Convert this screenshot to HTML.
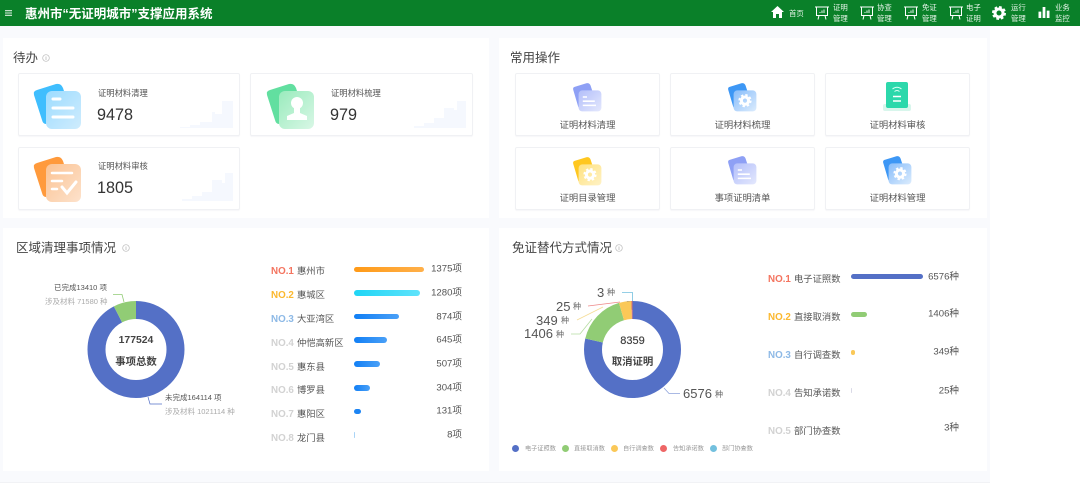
<!DOCTYPE html>
<html lang="zh">
<head>
<meta charset="utf-8">
<title>惠州市“无证明城市”支撑应用系统</title>
<style>
html,body{margin:0;padding:0;background:#fff}
body{width:1080px;height:490px;position:relative;overflow:hidden;font-family:"Liberation Sans","Noto Sans CJK SC",sans-serif;color:#444;filter:blur(.35px)}
.abs,.t,svg.a{position:absolute}
.t{white-space:nowrap;line-height:1}
.hdr{left:0;top:0;width:1080px;height:26px;background:#0a8029}
.bg{left:0;top:26px;width:990px;height:456px;background:#f9fafd;border-bottom:1px solid #f1f2f5}
.panel{background:#fff}
.card{box-sizing:border-box;background:#fff;border:1px solid #f0f1f4;border-radius:2px;box-shadow:0 1px 1px #f7f7f9}
.title{font-size:12.5px;color:#444;transform:translateY(1px)}
.nav{font-size:7.4px;color:#e8f5ea}
.lab{font-size:8.3px;color:#555}
.num{font-size:16.2px;color:#333}
.op{font-size:9.3px;color:#555;text-align:center;transform:translateY(1px)}
.no{font-size:9.8px;font-weight:bold;transform:translateY(2px)}
.nm{font-size:9.3px;color:#555;transform:translateY(2px)}
.v{font-size:9.6px;color:#555;text-align:right;width:60px;transform:translateY(1.5px)}
.bar{height:5.5px;border-radius:3px}
.s1{font-size:7.5px;color:#555;transform:translateY(1px)}
.s2{font-size:7.5px;color:#aaa;transform:translateY(1px)}
.b{font-size:10.4px;font-weight:bold;color:#444;text-align:center;width:80px;transform:translateY(1.2px)}
.big{font-size:13px;color:#555}
.z{font-size:8px;color:#666;transform:translateY(1px)}
.lg{font-size:6.2px;color:#999;transform:translateY(1.5px)}
.dot{width:7px;height:7px;border-radius:50%}
</style>
</head>
<body>
<div class="abs bg"></div>
<div class="abs panel" style="left:3px;top:38px;width:486px;height:180px"></div>
<div class="abs panel" style="left:499px;top:38px;width:488px;height:180px"></div>
<div class="abs panel" style="left:3px;top:228px;width:486px;height:243px"></div>
<div class="abs panel" style="left:499px;top:228px;width:488px;height:243px"></div>
<div class="abs hdr"></div>

<!-- header -->
<svg class="a" style="left:5px;top:10px" width="7" height="6"><path d="M0 .7H7M0 3H7M0 5.3H7" stroke="#dfeee2" stroke-width="1.1"/></svg>
<div class="t" style="left:25px;top:7.5px;font-size:12.5px;font-weight:bold;color:#fff">惠州市“无证明城市”支撑应用系统</div>

<svg class="a" style="left:771px;top:6px" width="13" height="12" viewBox="0 0 13 12"><path d="M6.5 0 13 6H11V12H8V8H5V12H2V6H0Z" fill="#fff"/></svg>
<div class="t nav" style="left:789px;top:9.5px">首页</div>

<svg class="a" style="left:815px;top:6px" width="14" height="14" viewBox="0 0 14 14" fill="none" stroke="#fff"><path d="M0 1H14M1.5 1V9.5H12.5V1M4 9.5 3 13.5M10 9.5 11 13.5" stroke-width="1"/><path d="M5 7V6M7 7V4.5M9 7V3.5" stroke-width=".9"/></svg>
<div class="t nav" style="left:833px;top:4px">证明</div><div class="t nav" style="left:833px;top:15px">管理</div>
<svg class="a" style="left:860px;top:6px" width="14" height="14" viewBox="0 0 14 14" fill="none" stroke="#fff"><path d="M0 1H14M1.5 1V9.5H12.5V1M4 9.5 3 13.5M10 9.5 11 13.5" stroke-width="1"/><path d="M5 7V6M7 7V4.5M9 7V3.5" stroke-width=".9"/></svg>
<div class="t nav" style="left:877px;top:4px">协查</div><div class="t nav" style="left:877px;top:15px">管理</div>
<svg class="a" style="left:904px;top:6px" width="14" height="14" viewBox="0 0 14 14" fill="none" stroke="#fff"><path d="M0 1H14M1.5 1V9.5H12.5V1M4 9.5 3 13.5M10 9.5 11 13.5" stroke-width="1"/><path d="M5 7V6M7 7V4.5M9 7V3.5" stroke-width=".9"/></svg>
<div class="t nav" style="left:922px;top:4px">免证</div><div class="t nav" style="left:922px;top:15px">管理</div>
<svg class="a" style="left:949px;top:6px" width="14" height="14" viewBox="0 0 14 14" fill="none" stroke="#fff"><path d="M0 1H14M1.5 1V9.5H12.5V1M4 9.5 3 13.5M10 9.5 11 13.5" stroke-width="1"/><path d="M5 7V6M7 7V4.5M9 7V3.5" stroke-width=".9"/></svg>
<div class="t nav" style="left:966px;top:4px">电子</div><div class="t nav" style="left:966px;top:15px">证明</div>
<svg class="a" style="left:992px;top:5.5px" width="14" height="14" viewBox="0 0 14 14"><circle cx="7" cy="7" r="4" fill="none" stroke="#fff" stroke-width="3"/><circle cx="7" cy="7" r="6" fill="none" stroke="#fff" stroke-width="2" stroke-dasharray="2.7 2"/></svg>
<div class="t nav" style="left:1011px;top:4px">运行</div><div class="t nav" style="left:1011px;top:15px">管理</div>
<svg class="a" style="left:1038px;top:7px" width="12" height="11" viewBox="0 0 12 12"><path d="M0 5H3V12H0ZM4.5 0H7.500V12H4.500ZM9 4H12V12H9Z" fill="#fff"/></svg>
<div class="t nav" style="left:1055px;top:4px">业务</div><div class="t nav" style="left:1055px;top:15px">监控</div>

<!-- titles -->
<div class="t title" style="left:13px;top:51px">待办</div>
<svg class="a" style="left:42px;top:54px" width="8" height="8"><circle cx="4" cy="4" r="3.300" fill="none" stroke="#bbb" stroke-width=".7"/><path d="M4 2.500V6" stroke="#bbb" stroke-width=".8"/></svg>
<div class="t title" style="left:510px;top:51px">常用操作</div>
<div class="t title" style="left:16px;top:241px">区域清理事项情况</div>
<svg class="a" style="left:122px;top:244px" width="8" height="8"><circle cx="4" cy="4" r="3.300" fill="none" stroke="#bbb" stroke-width=".7"/><path d="M4 2.500V6" stroke="#bbb" stroke-width=".8"/></svg>
<div class="t title" style="left:512px;top:241px">免证替代方式情况</div>
<svg class="a" style="left:615px;top:244px" width="8" height="8"><circle cx="4" cy="4" r="3.300" fill="none" stroke="#bbb" stroke-width=".7"/><path d="M4 2.500V6" stroke="#bbb" stroke-width=".8"/></svg>

<!-- todo cards -->
<div class="abs card" style="left:18px;top:73px;width:222px;height:63px"></div>
<div class="abs card" style="left:250px;top:73px;width:223px;height:63px"></div>
<div class="abs card" style="left:18px;top:147px;width:222px;height:63px"></div>

<svg class="a" style="left:170px;top:98px" width="64" height="32"><path d="M0 30H10V29H20V27H30V24H42V14H45V16H52V3H63V30Z" fill="#f5f8fe"/></svg>
<svg class="a" style="left:402px;top:98px" width="64" height="32"><path d="M0 30H12V28H22V25H32V20H42V10H52V12H55V3H64V30Z" fill="#f5f8fe"/></svg>
<svg class="a" style="left:170px;top:171px" width="64" height="32"><path d="M0 30H12V28H22V25H32V21H42V9H52V12H55V2H63V30Z" fill="#f5f8fe"/></svg>

<!-- large icons -->
<svg class="a" style="left:32px;top:82px" width="50" height="48" viewBox="0 0 50 48">
<defs><linearGradient id="g1" x1="0" y1="0" x2="1" y2="1"><stop offset="0" stop-color="#9ddcff"/><stop offset="1" stop-color="#cfecfd"/></linearGradient></defs>
<path d="M5 8 24 2Q29 1 31 6L42 40 14 42Q11 42 10 38L2 13Q1 9 5 8Z" fill="#3fbefe"/>
<rect x="14" y="9" width="35" height="38" rx="6" fill="url(#g1)"/>
<path d="M21 17H28M21 26H41M21 35H41" stroke="#fff" stroke-width="3" stroke-linecap="round"/></svg>

<svg class="a" style="left:265px;top:82px" width="50" height="48" viewBox="0 0 50 48">
<defs><linearGradient id="g2" x1="0" y1="0" x2="1" y2="1"><stop offset="0" stop-color="#9aebbd"/><stop offset="1" stop-color="#d9f7e6"/></linearGradient></defs>
<path d="M5 8 24 2Q29 1 31 6L42 40 14 42Q11 42 10 38L2 13Q1 9 5 8Z" fill="#62dfa0"/>
<rect x="14" y="9" width="35" height="38" rx="6" fill="url(#g2)"/>
<circle cx="32" cy="21" r="6" fill="#fff"/><path d="M29 26H35L35 31 42 34V38H22V34L29 31Z" fill="#fff"/></svg>

<svg class="a" style="left:32px;top:155px" width="50" height="48" viewBox="0 0 50 48">
<defs><linearGradient id="g3" x1="0" y1="0" x2="1" y2="1"><stop offset="0" stop-color="#fbc393"/><stop offset="1" stop-color="#fde2cc"/></linearGradient></defs>
<path d="M5 8 24 2Q29 1 31 6L42 40 14 42Q11 42 10 38L2 13Q1 9 5 8Z" fill="#ff9a3c"/>
<rect x="14" y="9" width="35" height="38" rx="6" fill="url(#g3)"/>
<path d="M20 18H40M20 26H30M20 34H25" stroke="#fff" stroke-width="2.500" stroke-linecap="round"/><path d="M30 32 35 38 44 27" fill="none" stroke="#fff" stroke-width="3" stroke-linecap="round"/></svg>

<div class="t lab" style="left:98px;top:88.500px">证明材料清理</div>
<div class="t num" style="left:97px;top:107px">9478</div>
<div class="t lab" style="left:331px;top:88.500px">证明材料梳理</div>
<div class="t num" style="left:330px;top:107px">979</div>
<div class="t lab" style="left:98px;top:161.500px">证明材料审核</div>
<div class="t num" style="left:97px;top:180px">1805</div>

<!-- ops -->
<div class="abs card" style="left:515px;top:73px;width:145px;height:63px"></div>
<div class="abs card" style="left:670px;top:73px;width:145px;height:63px"></div>
<div class="abs card" style="left:825px;top:73px;width:145px;height:63px"></div>
<div class="abs card" style="left:515px;top:147px;width:145px;height:63px"></div>
<div class="abs card" style="left:670px;top:147px;width:145px;height:63px"></div>
<div class="abs card" style="left:825px;top:147px;width:145px;height:63px"></div>

<svg class="a" style="left:572px;top:82px" width="30" height="30" viewBox="0 0 50 50">
<defs><linearGradient id="p1" x1="0" y1="0" x2="1" y2="1"><stop offset="0" stop-color="#b3bffa"/><stop offset="1" stop-color="#e4e8fd"/></linearGradient></defs>
<path d="M5 8 24 2Q29 1 31 6L42 40 14 44Q11 44 10 40L2 13Q1 9 5 8Z" fill="#8ea0f5"/>
<rect x="11" y="14" width="38" height="35" rx="6" fill="url(#p1)"/>
<path d="M18 25H25M18 32H38M18 39H40" stroke="#fff" stroke-width="2.600"/></svg>

<svg class="a" style="left:727px;top:82px" width="30" height="30" viewBox="0 0 50 50">
<defs><linearGradient id="p2" x1="0" y1="0" x2="1" y2="1"><stop offset="0" stop-color="#88bdfa"/><stop offset="1" stop-color="#dcecfd"/></linearGradient></defs>
<path d="M5 8 24 2Q29 1 31 6L42 40 14 44Q11 44 10 40L2 13Q1 9 5 8Z" fill="#3d97f5"/>
<rect x="11" y="14" width="38" height="35" rx="6" fill="url(#p2)"/>
<circle cx="30" cy="31" r="6" fill="none" stroke="#fff" stroke-width="5"/><circle cx="30" cy="31" r="9.500" fill="none" stroke="#fff" stroke-width="3" stroke-dasharray="4 3.500"/></svg>

<svg class="a" style="left:882px;top:81px" width="30" height="32" viewBox="0 0 30 32">
<rect x="1" y="23" width="28" height="7" rx="2" fill="#d8f6ec"/>
<rect x="4" y="1" width="22" height="26" rx="2" fill="#2cd8ab"/>
<path d="M10.500 8Q15 4.500 19.500 8M12.500 10.500Q15 8.500 17.500 10.500" fill="none" stroke="#d9fff3" stroke-width="1"/>
<path d="M11 15.500H19M11 20H19" stroke="#fff" stroke-width="1.600"/></svg>

<svg class="a" style="left:572px;top:156px" width="30" height="30" viewBox="0 0 50 50">
<defs><linearGradient id="p3" x1="0" y1="0" x2="1" y2="1"><stop offset="0" stop-color="#ffe27f"/><stop offset="1" stop-color="#fff2c6"/></linearGradient></defs>
<path d="M5 8 24 2Q29 1 31 6L42 40 14 44Q11 44 10 40L2 13Q1 9 5 8Z" fill="#ffc71f"/>
<rect x="11" y="14" width="38" height="35" rx="6" fill="url(#p3)"/>
<circle cx="30" cy="31" r="6" fill="none" stroke="#fff" stroke-width="5"/><circle cx="30" cy="31" r="9.500" fill="none" stroke="#fff" stroke-width="3" stroke-dasharray="4 3.500"/></svg>

<svg class="a" style="left:727px;top:155px" width="30" height="30" viewBox="0 0 50 50">
<defs><linearGradient id="p4" x1="0" y1="0" x2="1" y2="1"><stop offset="0" stop-color="#b3bffa"/><stop offset="1" stop-color="#e4e8fd"/></linearGradient></defs>
<path d="M5 8 24 2Q29 1 31 6L42 40 14 44Q11 44 10 40L2 13Q1 9 5 8Z" fill="#8ea0f5"/>
<rect x="11" y="14" width="38" height="35" rx="6" fill="url(#p4)"/>
<path d="M18 25H25M18 32H38M18 39H40" stroke="#fff" stroke-width="2.600"/></svg>

<svg class="a" style="left:882px;top:155px" width="30" height="30" viewBox="0 0 50 50">
<defs><linearGradient id="p5" x1="0" y1="0" x2="1" y2="1"><stop offset="0" stop-color="#88bdfa"/><stop offset="1" stop-color="#dcecfd"/></linearGradient></defs>
<path d="M5 8 24 2Q29 1 31 6L42 40 14 44Q11 44 10 40L2 13Q1 9 5 8Z" fill="#3d97f5"/>
<rect x="11" y="14" width="38" height="35" rx="6" fill="url(#p5)"/>
<circle cx="30" cy="31" r="6" fill="none" stroke="#fff" stroke-width="5"/><circle cx="30" cy="31" r="9.500" fill="none" stroke="#fff" stroke-width="3" stroke-dasharray="4 3.500"/></svg>

<div class="t op" style="left:515px;top:119.500px;width:145px">证明材料清理</div>
<div class="t op" style="left:670px;top:119.500px;width:145px">证明材料梳理</div>
<div class="t op" style="left:825px;top:119.500px;width:145px">证明材料审核</div>
<div class="t op" style="left:515px;top:192.500px;width:145px">证明目录管理</div>
<div class="t op" style="left:670px;top:192.500px;width:145px">事项证明清单</div>
<div class="t op" style="left:825px;top:192.500px;width:145px">证明材料管理</div>

<!-- left donut -->
<svg class="a" style="left:0;top:228px" width="260" height="200" viewBox="0 228 260 200" fill="none">
<circle cx="136" cy="349.500" r="39.500" stroke="#5470c6" stroke-width="18" pathLength="100" stroke-dasharray="92.45 7.550" transform="rotate(-90 136 349.500)"/>
<circle cx="136" cy="349.500" r="39.500" stroke="#91cc75" stroke-width="18" pathLength="100" stroke-dasharray="7.550 92.45" stroke-dashoffset="7.550" transform="rotate(-90 136 349.500)"/>
<path d="M113 294.500H122L124 302" stroke="#91cc75" stroke-width=".8"/>
<path d="M148 397 150 404H162" stroke="#5470c6" stroke-width=".7"/>
</svg>
<div class="t s1" style="left:54px;top:283px">已完成13410 项</div>
<div class="t s2" style="left:45px;top:297px">涉及材料 71580 种</div>
<div class="t s1" style="left:165px;top:393px">未完成164114 项</div>
<div class="t s2" style="left:165px;top:407px">涉及材料 1021114 种</div>
<div class="t b" style="left:96px;top:334.500px">177524</div>
<div class="t b" style="left:96px;top:356.500px">事项总数</div>

<!-- left ranking -->
<div class="t no" style="left:271px;top:265px;color:#f4745f">NO.1</div><div class="t nm" style="left:297px;top:265px">惠州市</div>
<div class="t no" style="left:271px;top:289px;color:#fbb82f">NO.2</div><div class="t nm" style="left:297px;top:289px">惠城区</div>
<div class="t no" style="left:271px;top:313px;color:#8db9e6">NO.3</div><div class="t nm" style="left:297px;top:313px">大亚湾区</div>
<div class="t no" style="left:271px;top:336.500px;color:#d2d2d2">NO.4</div><div class="t nm" style="left:297px;top:336.500px">仲恺高新区</div>
<div class="t no" style="left:271px;top:360.500px;color:#d2d2d2">NO.5</div><div class="t nm" style="left:297px;top:360.500px">惠东县</div>
<div class="t no" style="left:271px;top:384px;color:#d2d2d2">NO.6</div><div class="t nm" style="left:297px;top:384px">博罗县</div>
<div class="t no" style="left:271px;top:408px;color:#d2d2d2">NO.7</div><div class="t nm" style="left:297px;top:408px">惠阳区</div>
<div class="t no" style="left:271px;top:432px;color:#d2d2d2">NO.8</div><div class="t nm" style="left:297px;top:432px">龙门县</div>

<div class="abs bar" style="left:354px;top:266.500px;width:70px;background:linear-gradient(90deg,#ff9a17,#ffb04a)"></div>
<div class="abs bar" style="left:354px;top:290px;width:65.500px;background:linear-gradient(90deg,#1fd5f5,#5fe3fb)"></div>
<div class="abs bar" style="left:354px;top:313.500px;width:44.500px;background:linear-gradient(90deg,#117ff5,#4aa0f7)"></div>
<div class="abs bar" style="left:354px;top:337px;width:33px;background:linear-gradient(90deg,#117ff5,#4aa0f7)"></div>
<div class="abs bar" style="left:354px;top:361px;width:26px;background:linear-gradient(90deg,#117ff5,#4aa0f7)"></div>
<div class="abs bar" style="left:354px;top:385px;width:16px;background:linear-gradient(90deg,#117ff5,#4aa0f7)"></div>
<div class="abs bar" style="left:354px;top:408.500px;width:7px;background:#1c84f3"></div>
<div class="abs bar" style="left:354px;top:432px;width:1px;background:#a9d4f7"></div>

<div class="t v" style="left:402px;top:263px">1375项</div>
<div class="t v" style="left:402px;top:287px">1280项</div>
<div class="t v" style="left:402px;top:310.500px">874项</div>
<div class="t v" style="left:402px;top:334px">645项</div>
<div class="t v" style="left:402px;top:358px">507项</div>
<div class="t v" style="left:402px;top:382px">304项</div>
<div class="t v" style="left:402px;top:405px">131项</div>
<div class="t v" style="left:402px;top:429px">8项</div>

<!-- right donut -->
<svg class="a" style="left:500px;top:270px" width="250" height="140" viewBox="500 270 250 140" fill="none">
<g transform="rotate(-90 632.500 349.500)" stroke-width="18">
<circle cx="632.500" cy="349.500" r="39.500" stroke="#5470c6" pathLength="100" stroke-dasharray="78.67 21.33"/>
<circle cx="632.500" cy="349.500" r="39.500" stroke="#91cc75" pathLength="100" stroke-dasharray="16.82 83.18" stroke-dashoffset="-78.67"/>
<circle cx="632.500" cy="349.500" r="39.500" stroke="#fac858" pathLength="100" stroke-dasharray="4.18 95.82" stroke-dashoffset="-95.49"/>
<circle cx="632.500" cy="349.500" r="39.500" stroke="#ee6666" pathLength="100" stroke-dasharray=".3 99.7" stroke-dashoffset="-99.67"/>
</g>
<path d="M622 292.500H632.500V301" stroke="#73c0de" stroke-width=".8"/>
<path d="M588 306 620 302" stroke="#ee8888" stroke-width=".8"/>
<path d="M577 320 603 307" stroke="#f5dc95" stroke-width=".8"/>
<path d="M571 334H580L592 319" stroke="#b5dda2" stroke-width=".8"/>
<path d="M664 388 669 393.500H680" stroke="#8fa3dc" stroke-width=".8"/>
</svg>
<div class="t big" style="left:597px;top:285.500px">3</div><div class="t z" style="left:607px;top:288px">种</div>
<div class="t big" style="left:556px;top:299.500px">25</div><div class="t z" style="left:573px;top:302px">种</div>
<div class="t big" style="left:536px;top:313.500px">349</div><div class="t z" style="left:561px;top:316px">种</div>
<div class="t big" style="left:524px;top:327px">1406</div><div class="t z" style="left:556px;top:329.500px">种</div>
<div class="t big" style="left:683px;top:387px">6576</div><div class="t z" style="left:715px;top:389.500px">种</div>
<div class="t b" style="left:592.500px;top:334.500px;font-size:11px;font-weight:normal;text-shadow:0 0 .4px #444">8359</div>
<div class="t b" style="left:592.500px;top:356.500px">取消证明</div>

<div class="abs dot" style="left:512px;top:445px;background:#5470c6"></div><div class="t lg" style="left:525px;top:445px">电子证照数</div>
<div class="abs dot" style="left:562px;top:445px;background:#91cc75"></div><div class="t lg" style="left:574px;top:445px">直接取消数</div>
<div class="abs dot" style="left:611px;top:445px;background:#fac858"></div><div class="t lg" style="left:623px;top:445px">自行调查数</div>
<div class="abs dot" style="left:660px;top:445px;background:#ee6666"></div><div class="t lg" style="left:673px;top:445px">告知承诺数</div>
<div class="abs dot" style="left:710px;top:445px;background:#73c0de"></div><div class="t lg" style="left:722px;top:445px">部门协查数</div>

<!-- right ranking -->
<div class="t no" style="left:768px;top:273px;color:#f4745f">NO.1</div><div class="t nm" style="left:794px;top:273px">电子证照数</div>
<div class="t no" style="left:768px;top:310.500px;color:#fbb82f">NO.2</div><div class="t nm" style="left:794px;top:310.500px">直接取消数</div>
<div class="t no" style="left:768px;top:348.500px;color:#8db9e6">NO.3</div><div class="t nm" style="left:794px;top:348.500px">自行调查数</div>
<div class="t no" style="left:768px;top:386.500px;color:#d2d2d2">NO.4</div><div class="t nm" style="left:794px;top:386.500px">告知承诺数</div>
<div class="t no" style="left:768px;top:424.500px;color:#d2d2d2">NO.5</div><div class="t nm" style="left:794px;top:424.500px">部门协查数</div>

<div class="abs bar" style="left:851px;top:273.500px;width:72px;background:#5470c6"></div>
<div class="abs bar" style="left:851px;top:311.500px;width:16px;background:#91cc75"></div>
<div class="abs bar" style="left:851px;top:349.500px;width:4px;background:#fac858"></div>
<div class="abs bar" style="left:851px;top:387.500px;width:1px;background:#d9d9e6"></div>

<div class="t v" style="left:899px;top:270.500px">6576种</div>
<div class="t v" style="left:899px;top:308px">1406种</div>
<div class="t v" style="left:899px;top:346px">349种</div>
<div class="t v" style="left:899px;top:384.500px">25种</div>
<div class="t v" style="left:899px;top:422px">3种</div>
</body>
</html>
